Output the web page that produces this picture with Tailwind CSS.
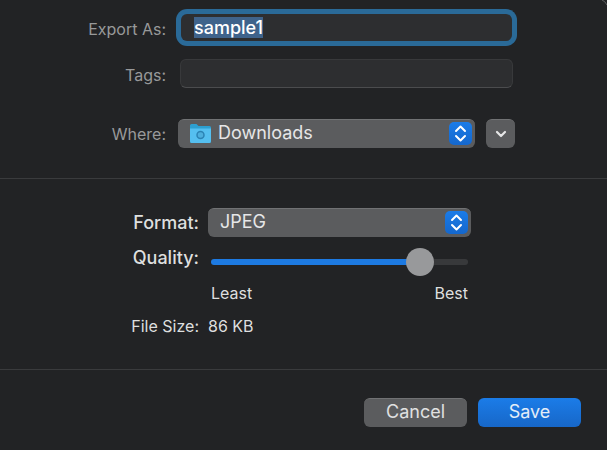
<!DOCTYPE html>
<html lang="en">
<head>
  <meta charset="UTF-8" />
  <meta name="viewport" content="width=device-width, initial-scale=1.0" />
  <title>Export</title>
  <script src="https://cdn.jsdelivr.net/npm/@tailwindcss/browser@4"></script>
</head>
<body class="min-h-screen bg-[#222325] font-['Inter',sans-serif] text-[#dedfdf]">
  <form class="relative flex min-h-screen flex-col overflow-hidden">
    <!-- Window corner -->
    <svg class="pointer-events-none absolute top-0 right-0 h-[6px] w-[6px]" viewBox="0 0 6 6" fill="none" stroke="#5f6062">
      <path d="M1 0q3 1 5 5" />
    </svg>

    <!-- File name, tags, folder -->
    <section class="grid grid-cols-[166px_1fr] items-center gap-x-3 border-b border-[#3a3b3d] pt-[14px] pr-[92px] pb-[30px] text-[#98999a]">
      <label for="name" class="pt-[2px] text-right text-base">Export As:</label>
      <input id="name" type="text" value="sample1" autofocus class="mx-[3px] h-[27px] min-w-0 rounded-md bg-[#2d2e30] px-[13px] text-lg leading-6 font-medium text-white ring-5 ring-[#2a6a98] outline-none selection:bg-[#3f638b] selection:text-white" />

      <label for="tags" class="mt-[18px] pt-[2px] text-right text-base">Tags:</label>
      <input id="tags" type="text" class="mx-[2px] mt-[18px] h-[29px] min-w-0 rounded-md border border-[#38393b] border-b-[#4b4c4e] bg-[#2d2e30] px-3 text-lg text-white outline-none" />

      <label for="where" class="mt-[31px] text-right text-base">Where:</label>
      <div class="mt-[31px] flex gap-[11px]">
        <div class="relative flex-1">
          <select id="where" class="h-[29px] w-full appearance-none rounded-md border-t border-[#717274] bg-[#5b5c5e] pr-8 pb-[2px] pl-10 text-lg leading-6 text-[#e6e6e7]">
            <option>Downloads</option>
          </select>
          <svg class="pointer-events-none absolute top-[5px] left-3 h-[19px] w-[21px]" viewBox="0 0 21 19">
            <path d="M0 1.500Q0 0 1.500 0h5l2 2h11Q21 2 21 3.500V17q0 2-1.500 2h-18Q0 19 0 17z" fill="#2d9fd0" />
            <path d="M0 4.500h21V17q0 2-1.500 2h-18Q0 19 0 17z" fill="#55bff0" />
            <circle cx="10.500" cy="11" r="3.500" fill="#4daedd" stroke="#2b83b4" stroke-width="1.500" />
          </svg>
          <svg class="pointer-events-none absolute top-[3px] right-[3px] h-[23px] w-[23px] rounded-[5px] bg-linear-to-b from-[#1b7ce8] to-[#1467cd]" viewBox="0 0 23 23" fill="none" stroke="#fff" stroke-width="2" stroke-linecap="round" stroke-linejoin="round">
            <path d="M7 9l4.500-4.500L16 9M7 14l4.500 4.500L16 14" />
          </svg>
        </div>
        <button type="button" aria-label="Show more" class="flex h-[29px] w-[29px] items-center justify-center rounded-md border-t border-[#717274] bg-[#5b5c5e]">
          <svg class="h-3 w-3" viewBox="0 0 12 12" fill="none" stroke="#e6e6e7" stroke-width="2.200" stroke-linecap="round" stroke-linejoin="round">
            <path d="M2 4l4 4 4-4" />
          </svg>
        </button>
      </div>
    </section>

    <!-- Format options -->
    <section class="grid grid-cols-[199px_1fr] items-center gap-x-[9px] border-b border-[#3a3b3d] pt-[29px] pr-[136px] pb-[33px]">
      <label for="format" class="text-right text-lg leading-7 font-medium">Format:</label>
      <div class="relative">
        <select id="format" class="h-[29px] w-full appearance-none rounded-md border-t border-[#717274] bg-[#5b5c5e] pr-8 pb-[2px] pl-3 text-lg leading-6 text-[#e6e6e7]">
          <option>JPEG</option>
        </select>
        <svg class="pointer-events-none absolute top-[3px] right-[3px] h-[23px] w-[23px] rounded-[5px] bg-linear-to-b from-[#1b7ce8] to-[#1467cd]" viewBox="0 0 23 23" fill="none" stroke="#fff" stroke-width="2" stroke-linecap="round" stroke-linejoin="round">
          <path d="M7 9l4.500-4.500L16 9M7 14l4.500 4.500L16 14" />
        </svg>
      </div>

      <label for="quality" class="mt-[7px] pb-2 text-right text-lg leading-7 font-medium">Quality:</label>
      <input id="quality" type="range" min="0" max="100" value="85" class="mx-[3px] mt-[7px] h-7 min-w-0 appearance-none bg-transparent [&::-webkit-slider-runnable-track]:h-[6px] [&::-webkit-slider-runnable-track]:rounded-full [&::-webkit-slider-runnable-track]:bg-linear-[90deg,#1d7ae2_80%,#38393b_80%] [&::-webkit-slider-thumb]:-mt-[11px] [&::-webkit-slider-thumb]:h-7 [&::-webkit-slider-thumb]:w-7 [&::-webkit-slider-thumb]:appearance-none [&::-webkit-slider-thumb]:rounded-full [&::-webkit-slider-thumb]:bg-[#98999b]" />

      <div class="col-start-2 mx-[3px] mt-[3px] flex justify-between text-base leading-5">
        <span>Least</span>
        <span>Best</span>
      </div>

      <span class="mt-[13px] text-right text-base leading-5">File Size:</span>
      <span class="mt-[13px] text-base leading-5">86 KB</span>
    </section>

    <!-- Actions -->
    <footer class="flex justify-end gap-[11px] pt-7 pr-[26px] pb-[23px] text-lg leading-6">
      <button type="button" class="h-[29px] w-[103px] rounded-md border-t border-[#717274] bg-[#5b5c5e] pb-[2px] text-[#e0e1e1]">Cancel</button>
      <button type="submit" class="h-[29px] w-[103px] rounded-md bg-linear-to-b from-[#1b7ce8] to-[#1767c8] pb-px text-[#e3edf8]">Save</button>
    </footer>
  </form>

  <script>
    const nameField = document.getElementById('name');
    nameField.focus();
    nameField.select();
  </script>
</body>
</html>
